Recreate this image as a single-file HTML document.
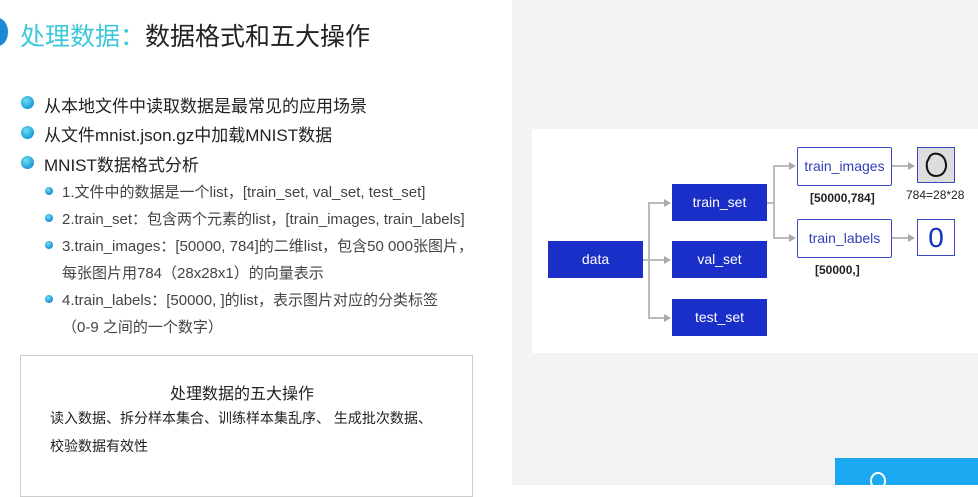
<!DOCTYPE html>
<html><head><meta charset="utf-8"><style>
body{margin:0;width:978px;height:485px;overflow:hidden;background:#fff;position:relative;font-family:"Liberation Sans","Noto Sans CJK SC",sans-serif;}
.a{position:absolute;white-space:nowrap;}
.d1{position:absolute;width:13px;height:13px;border-radius:50%;background:radial-gradient(circle at 40% 35%,#6fe0f0,#1a9ad8 70%);}
.d2{position:absolute;width:8px;height:8px;border-radius:50%;background:radial-gradient(circle at 40% 35%,#6fe0f0,#1a8ad8 70%);}
.l1{font-size:17px;color:#222;}
.l2{font-size:15px;color:#444;}
.bb{position:absolute;background:#1a2ec8;color:#fff;font-size:14px;text-align:center;}
.wb{position:absolute;background:#fff;border:1px solid #3a49c0;color:#3040b8;font-size:14px;text-align:center;border-radius:2px;}
.ln{position:absolute;background:#bbb;}
.ar{position:absolute;width:0;height:0;border-top:4px solid transparent;border-bottom:4px solid transparent;border-left:7px solid #aaa;}
</style></head><body>
<div style="position:absolute;left:512px;top:0;width:466px;height:485px;background:#f3f3f3"></div>
<div style="position:absolute;left:-12px;top:18px;width:20px;height:28px;border-radius:50%;background:#1a8ad8"></div>
<div class="a" style="left:20px;top:17px;font-size:25px;color:#3cc8d8">处理数据：<span style="color:#222">数据格式和五大操作</span></div>

<div class="d1" style="left:21px;top:96px"></div><div class="a l1" style="left:44px;top:92px">从本地文件中读取数据是最常见的应用场景</div>
<div class="d1" style="left:21px;top:126px"></div><div class="a l1" style="left:44px;top:121px">从文件mnist.json.gz中加载MNIST数据</div>
<div class="d1" style="left:21px;top:156px"></div><div class="a l1" style="left:44px;top:151px">MNIST数据格式分析</div>

<div class="d2" style="left:45px;top:187px"></div><div class="a l2" style="left:62px;top:181px">1.文件中的数据是一个list，[train_set, val_set, test_set]</div>
<div class="d2" style="left:45px;top:214px"></div><div class="a l2" style="left:62px;top:208px">2.train_set：包含两个元素的list，[train_images, train_labels]</div>
<div class="d2" style="left:45px;top:241px"></div><div class="a l2" style="left:62px;top:235px">3.train_images：[50000, 784]的二维list，包含50 000张图片，</div>
<div class="a l2" style="left:62px;top:262px">每张图片用784（28x28x1）的向量表示</div>
<div class="d2" style="left:45px;top:295px"></div><div class="a l2" style="left:62px;top:289px">4.train_labels：[50000, ]的list，表示图片对应的分类标签</div>
<div class="a l2" style="left:62px;top:316px">（0-9 之间的一个数字）</div>

<div style="position:absolute;left:20px;top:355px;width:451px;height:140px;border:1px solid #ccc;background:#fff"></div>
<div class="a" style="left:170px;top:380px;font-size:16px;color:#222">处理数据的五大操作</div>
<div class="a" style="left:50px;top:408px;font-size:14px;color:#222">读入数据、拆分样本集合、训练样本集乱序、 生成批次数据、</div>
<div class="a" style="left:50px;top:436px;font-size:14px;color:#222">校验数据有效性</div>

<div style="position:absolute;left:532px;top:129px;width:446px;height:224px;background:#fff"></div>
<div class="ln" style="left:643px;top:259px;width:22px;height:2px"></div><div class="ar" style="left:664px;top:256px"></div>
<div class="ln" style="left:648px;top:202px;width:2px;height:116px"></div>
<div class="ln" style="left:648px;top:202px;width:17px;height:2px"></div><div class="ar" style="left:664px;top:199px"></div>
<div class="ln" style="left:648px;top:317px;width:17px;height:2px"></div><div class="ar" style="left:664px;top:314px"></div>
<div class="ln" style="left:767px;top:202px;width:7px;height:2px"></div>
<div class="ln" style="left:773px;top:165px;width:2px;height:74px"></div>
<div class="ln" style="left:773px;top:165px;width:17px;height:2px"></div><div class="ar" style="left:789px;top:162px"></div>
<div class="ln" style="left:773px;top:237px;width:17px;height:2px"></div><div class="ar" style="left:789px;top:234px"></div>
<div class="ln" style="left:891px;top:165px;width:17px;height:2px"></div><div class="ar" style="left:908px;top:162px"></div>
<div class="ln" style="left:891px;top:237px;width:17px;height:2px"></div><div class="ar" style="left:908px;top:234px"></div>
<div class="bb" style="left:548px;top:241px;width:95px;height:37px;line-height:37px">data</div>
<div class="bb" style="left:672px;top:184px;width:95px;height:37px;line-height:37px">train_set</div>
<div class="bb" style="left:672px;top:241px;width:95px;height:37px;line-height:37px">val_set</div>
<div class="bb" style="left:672px;top:299px;width:95px;height:37px;line-height:37px">test_set</div>
<div class="wb" style="left:797px;top:147px;width:93px;height:37px;line-height:37px">train_images</div>
<div class="wb" style="left:797px;top:219px;width:93px;height:37px;line-height:37px">train_labels</div>
<div style="position:absolute;left:917px;top:147px;width:36px;height:34px;background:#ddd;border:1px solid #3a49c0"><svg width="36" height="34"><path d="M12 8 C16 4 24 5 27 12 C30 20 26 28 18 28 C10 28 8 20 9 14 Z" fill="none" stroke="#111" stroke-width="2"/></svg></div>
<div style="position:absolute;left:917px;top:219px;width:36px;height:35px;background:#fff;border:1px solid #3a49c0;color:#1030b8;font-size:28px;text-align:center;line-height:35px">0</div>
<div class="a" style="left:810px;top:191px;font-size:12px;font-weight:bold;color:#222">[50000,784]</div>
<div class="a" style="left:906px;top:188px;font-size:12px;color:#222">784=28*28</div>
<div class="a" style="left:815px;top:263px;font-size:12px;font-weight:bold;color:#222">[50000,]</div>
<div style="position:absolute;left:835px;top:458px;width:143px;height:27px;background:#1aa8f0"></div>
<div style="position:absolute;left:870px;top:472px;width:12px;height:14px;border:2px solid #fff;border-radius:50%"></div>
</body></html>
